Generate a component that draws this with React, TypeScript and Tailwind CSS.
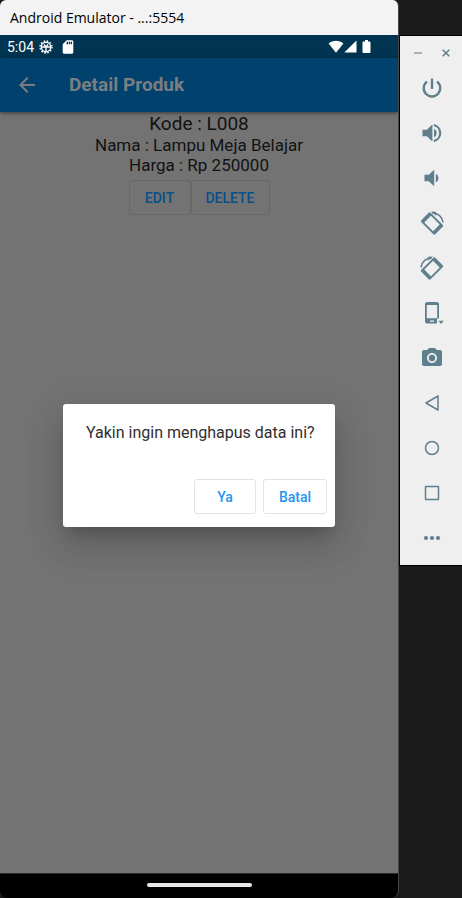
import type { ReactNode } from "react";
import { MdArrowBack, MdCameraAlt, MdSdCard } from "react-icons/md";

function PowerIcon() {
  return (
    <svg viewBox="0 0 24 24" className="size-6" fill="none" stroke="currentColor" strokeWidth="2.4">
      <path d="M12 2.500v10.500M7 5.600a8.300 8.300 0 1 0 10 0" />
    </svg>
  );
}

function RotateIcon({ mirrored = false }: { mirrored?: boolean }) {
  return (
    <svg viewBox="0 0 24 24" className={mirrored ? "size-6 -scale-x-100" : "size-6"} fill="currentColor">
      <g transform="rotate(45 12 12.5)">
        <path
          fillRule="evenodd"
          d="M3.500 5.900h17a1.400 1.400 0 0 1 1.400 1.400v10.400a1.400 1.400 0 0 1-1.400 1.400h-17a1.400 1.400 0 0 1-1.400-1.400V7.300a1.400 1.400 0 0 1 1.400-1.400zM5.800 7.800v9.400h12.400V7.800z"
        />
      </g>
      <path d="M12 1.700A11 11 0 0 1 23 11.300" fill="none" stroke="currentColor" strokeWidth="1.500" />
      <path d="M10.800.6l5.200.2-.6 1.600 1 2.600z" />
    </svg>
  );
}

function VolumeUpIcon() {
  return (
    <svg viewBox="0 0 24 24" className="size-6" fill="currentColor">
      <path d="M2.500 8.800v6.400h4.300l5.600 5.300v-17L6.800 8.800z" />
      <path d="M14 7.800v8.400a4.600 4.600 0 0 0 0-8.400z" />
      <path d="M13.800 4a8.200 8.200 0 0 1 0 16" fill="none" stroke="currentColor" strokeWidth="2.200" />
    </svg>
  );
}

function VolumeDownIcon() {
  return (
    <svg viewBox="0 0 24 24" className="size-6" fill="currentColor">
      <path d="M4.500 8.800v6.400h4.300l5.400 5V3.800l-5.400 5z" />
      <path d="M15.800 7.800v8.400a4.600 4.600 0 0 0 0-8.400z" />
    </svg>
  );
}

function DeviceIcon() {
  return (
    <svg viewBox="0 0 24 24" className="size-6" fill="currentColor">
      <path
        fillRule="evenodd"
        d="M7 1h10a2 2 0 0 1 2 2v14.500h-1.800V4H6.800v13.300H17v5.200H7a2 2 0 0 1-2-2V3a2 2 0 0 1 2-2zM10 19.400v1.300h4v-1.300z"
      />
      <path d="M18.400 19.800h5.400L21.100 23z" />
    </svg>
  );
}

function Outline({ children }: { children: ReactNode }) {
  return (
    <svg viewBox="0 0 24 24" className="size-6" fill="none" stroke="currentColor" strokeWidth="1.5" strokeLinejoin="round">
      {children}
    </svg>
  );
}

const tools: { label: string; icon: ReactNode }[] = [
  { label: "Power", icon: <PowerIcon /> },
  { label: "Volume up", icon: <VolumeUpIcon /> },
  { label: "Volume down", icon: <VolumeDownIcon /> },
  { label: "Rotate left", icon: <RotateIcon /> },
  { label: "Rotate right", icon: <RotateIcon mirrored /> },
  { label: "Device posture", icon: <DeviceIcon /> },
  { label: "Take screenshot", icon: <MdCameraAlt className="size-6" /> },
  { label: "Back", icon: <Outline><path d="M18 5v14L6 12z" /></Outline> },
  { label: "Home", icon: <Outline><circle cx="12" cy="12" r="6.5" /></Outline> },
  { label: "Overview", icon: <Outline><rect x="5.5" y="5.5" width="13" height="13" rx="0.5" /></Outline> },
  {
    label: "More",
    icon: (
      <svg viewBox="0 0 24 24" className="size-6" fill="currentColor">
        <circle cx="6" cy="12" r="2.1" />
        <circle cx="12" cy="12" r="2.1" />
        <circle cx="18" cy="12" r="2.1" />
      </svg>
    ),
  },
];

function StatusBar() {
  return (
    <div className="flex h-[23px] items-center bg-[#003451] pr-[27px] pl-[7px] text-white">
      <span className="text-sm">5:04</span>
      <svg viewBox="0 0 14 14" className="ml-[5px] size-3.5" fill="none" stroke="currentColor">
        <circle cx="7" cy="7" r="4.7" strokeWidth="1.4" />
        <circle cx="7" cy="7" r="6" strokeWidth="1.4" strokeDasharray="1.57 1.57" />
        <path d="M2.500 7h9M7 7v4.500M5 4.500L7 7l2-2.500" strokeWidth="1.4" />
      </svg>
      <MdSdCard className="ml-[7px] size-4" />
      <svg viewBox="0 0 16 13" className="ml-auto h-[13px] w-4" fill="currentColor">
        <path d="M8 12.700L.6 3.600C4.500-.2 11.500-.2 15.400 3.600z" />
      </svg>
      <svg viewBox="0 0 13 13" className="size-[13px]" fill="currentColor">
        <path d="M12.500.5v12H.3z" />
      </svg>
      <svg viewBox="0 0 9 13" className="ml-[5px] h-[13px] w-[9px]" fill="currentColor">
        <path d="M3 0h3v1.400h1.500a1 1 0 0 1 1 1V12a1 1 0 0 1-1 1h-6a1 1 0 0 1-1-1V2.400a1 1 0 0 1 1-1H3z" />
      </svg>
    </div>
  );
}

function ConfirmDialog() {
  const button =
    "h-[35px] rounded-[3px] border border-[#e3e3e3] text-sm font-medium text-[#2196f3]";
  return (
    <div className="absolute inset-0 flex items-center px-[63px]">
      <div
        role="dialog"
        aria-labelledby="confirm-text"
        className="w-full rounded-[3px] bg-white pt-[18px] pb-[13px] shadow-[0_10px_14px_-6px_rgba(0,0,0,0.2),0_20px_34px_3px_rgba(0,0,0,0.12),0_8px_40px_7px_rgba(0,0,0,0.05)]"
      >
        <p id="confirm-text" className="px-[23px] text-base leading-[22px] whitespace-nowrap text-[#2f2f2f]">
          Yakin ingin menghapus data ini?
        </p>
        <div className="mt-[35px] flex justify-end gap-[7px] pr-2">
          <button className={`${button} w-[62px]`}>Ya</button>
          <button className={`${button} w-16`}>Batal</button>
        </div>
      </div>
    </div>
  );
}

export default function App() {
  const action = "h-[35px] rounded-[3px] border border-[#676767] text-sm font-medium text-[#07508a]";
  return (
    <div className="flex min-h-screen items-stretch bg-[#1a1a1a] font-['Roboto',sans-serif]">
      <div className="flex min-w-0 flex-1 flex-col overflow-hidden rounded-t-[6px] rounded-b-[8px] border-r border-[#444444] bg-black">
        <div className="flex h-[35px] items-center bg-[#f3f3f3] pl-2.5 font-['Open_Sans',sans-serif] text-sm text-black">
          Android Emulator - ...:5554
        </div>
        <StatusBar />
        <div className="relative flex flex-1 flex-col bg-[#737373]">
          <header className="flex h-[54px] items-center bg-[#00426d] pl-[15px] text-[#7a7e82] shadow-[0_1px_4px_rgba(0,0,0,0.5)]">
            <button aria-label="Kembali">
              <MdArrowBack className="size-6" />
            </button>
            <h1 className="ml-[30px] text-[19px] font-bold">Detail Produk</h1>
          </header>
          <main className="flex flex-1 flex-col items-center text-[17px] leading-5 text-[#121212]">
            <p className="text-[19px] leading-[23px]">Kode : L008</p>
            <p>Nama : Lampu Meja Belajar</p>
            <p>Harga : Rp 250000</p>
            <div className="mt-[5px] flex">
              <button className={`${action} w-[62px]`}>EDIT</button>
              <button className={`${action} w-[79px]`}>DELETE</button>
            </div>
          </main>
          <ConfirmDialog />
        </div>
        <div className="flex h-[25px] justify-center border-t border-[#2a2a2a] pt-[9px]">
          <div className="h-1 w-[105px] rounded-full bg-[#e8e6e6]" />
        </div>
      </div>
      <aside className="mt-[35px] flex w-[63px] shrink-0 flex-col self-start border border-r-0 border-black bg-[#efefef] pb-[5px] pl-0.5 text-[#5f7f8d]">
        <div className="flex h-[29px] items-center justify-center gap-5 pt-[5px]">
          <button aria-label="Minimize">
            <svg viewBox="0 0 8 8" className="size-2" stroke="currentColor" strokeWidth="1.5" opacity="0.7">
              <path d="M0 4h8" />
            </svg>
          </button>
          <button aria-label="Close">
            <svg viewBox="0 0 8 8" className="size-2" stroke="currentColor" strokeWidth="1.5">
              <path d="M.7.7l6.600 6.600M7.300.7L.7 7.300" />
            </svg>
          </button>
        </div>
        {tools.map((tool) => (
          <button key={tool.label} aria-label={tool.label} className="flex h-[45px] items-center justify-center">
            {tool.icon}
          </button>
        ))}
      </aside>
    </div>
  );
}
